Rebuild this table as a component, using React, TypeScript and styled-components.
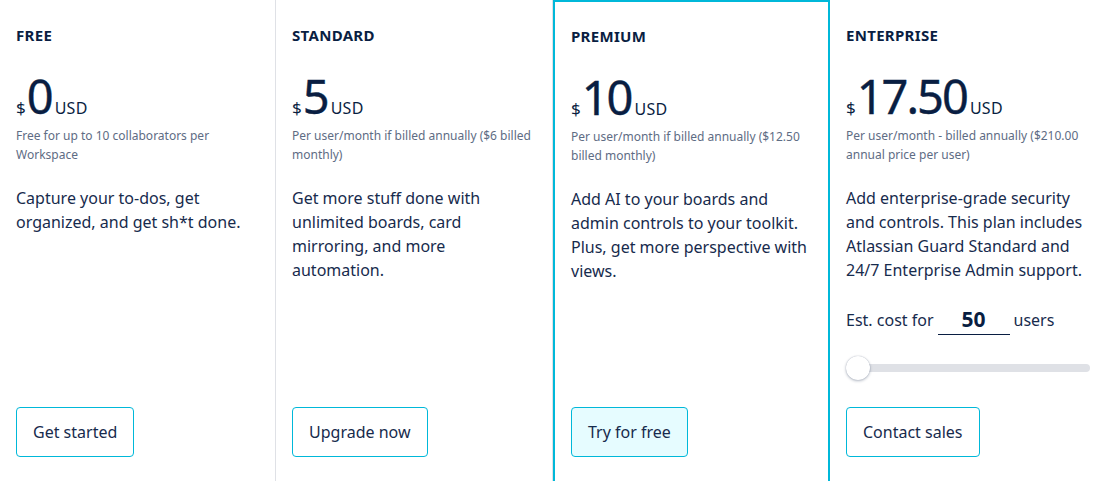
import React, { useState } from "react";
import styled, { createGlobalStyle } from "styled-components";

const Global = createGlobalStyle`
  html, body { margin: 0; padding: 0; background: #fff; overflow: hidden; }
  body { font-family: "Noto Sans", "Liberation Sans", sans-serif; color: #172b4d; }
  * { box-sizing: border-box; }
`;

const Grid = styled.div`
  display: grid;
  grid-template-columns: 276px 277px 277px 1fr;
  width: 1104px;
  height: 484px;
`;

const Column = styled.div<{ $featured?: boolean; $divider?: boolean }>`
  display: flex;
  flex-direction: column;
  padding: ${(p) => (p.$featured ? "25px 16px 25px" : "26px 16px 27px")};
  border-right: ${(p) => (p.$divider ? "1px solid #dfe1e6" : "none")};
  border: ${(p) => (p.$featured ? "2px solid #00b8d9" : undefined)};
`;

const Title = styled.div`
  font-size: 15px;
  line-height: 18px;
  font-weight: 700;
  color: #091e42;
  letter-spacing: 0.3px;
`;

const PriceRow = styled.div`
  display: flex;
  align-items: baseline;
  margin-top: 26px;
  color: #091e42;
`;

const Currency = styled.span`
  font-size: 17px;
  margin-right: 1px;
`;

const Amount = styled.span`
  font-size: 47px;
  line-height: 52px;
  font-weight: 400;
  letter-spacing: -2px;
  -webkit-text-stroke: 0.4px #091e42;
`;

const Unit = styled.span`
  font-size: 16px;
  margin-left: 3px;
  letter-spacing: 0.3px;
`;

const Note = styled.div`
  font-size: 12px;
  line-height: 19px;
  color: #5e6c84;
  margin-top: 4px;
`;

const Desc = styled.div`
  font-size: 16px;
  line-height: 24px;
  color: #172b4d;
  margin-top: 22px;
`;

const CostRow = styled.div`
  display: flex;
  align-items: center;
  margin-top: 23px;
  font-size: 16px;
  line-height: 24px;
`;

const CostInput = styled.div`
  width: 72px;
  margin: 0 4px 0 4px;
  text-align: center;
  font-size: 21px;
  font-weight: 700;
  color: #091e42;
  border-bottom: 1px solid #091e42;
  line-height: 28px;
  padding-bottom: 1px;
`;

const Track = styled.div`
  position: relative;
  margin-top: 29px;
  height: 8px;
  border-radius: 4px;
  background: #dfe1e6;
  width: 244px;
`;

const Thumb = styled.div`
  position: absolute;
  left: 0;
  top: -8px;
  width: 24px;
  height: 24px;
  border-radius: 50%;
  background: #fff;
  box-shadow: 0 1px 3px rgba(9, 30, 66, 0.3), 0 0 1px rgba(9, 30, 66, 0.3);
`;

const Button = styled.button<{ $primary?: boolean }>`
  margin-top: auto;
  align-self: flex-start;
  font-family: inherit;
  font-size: 16px;
  line-height: 24px;
  color: #172b4d;
  padding: 12px 16px;
  border: 1px solid #00b8d9;
  border-radius: 4px;
  background: ${(p) => (p.$primary ? "#e6fcff" : "#fff")};
  cursor: pointer;
`;

type Plan = {
  name: string;
  amount: string;
  note: string;
  desc: string;
  cta: string;
  featured?: boolean;
  divider?: boolean;
  estimator?: boolean;
};

const plans: Plan[] = [
  {
    name: "FREE",
    amount: "0",
    note: "Free for up to 10 collaborators per Workspace",
    desc: "Capture your to-dos, get organized, and get sh*t done.",
    cta: "Get started",
    divider: true,
  },
  {
    name: "STANDARD",
    amount: "5",
    note: "Per user/month if billed annually ($6 billed monthly)",
    desc: "Get more stuff done with unlimited boards, card mirroring, and more automation.",
    cta: "Upgrade now",
    divider: true,
  },
  {
    name: "PREMIUM",
    amount: "10",
    note: "Per user/month if billed annually ($12.50 billed monthly)",
    desc: "Add AI to your boards and admin controls to your toolkit. Plus, get more perspective with views.",
    cta: "Try for free",
    featured: true,
  },
  {
    name: "ENTERPRISE",
    amount: "17.50",
    note: "Per user/month - billed annually ($210.00 annual price per user)",
    desc: "Add enterprise-grade security and controls. This plan includes Atlassian Guard Standard and 24/7 Enterprise Admin support.",
    cta: "Contact sales",
    estimator: true,
  },
];

export default function App() {
  const [users] = useState(50);
  return (
    <>
      <Global />
      <Grid>
        {plans.map((p) => (
          <Column key={p.name} $featured={p.featured} $divider={p.divider}>
            <Title>{p.name}</Title>
            <PriceRow>
              <Currency>$</Currency>
              <Amount>{p.amount}</Amount>
              <Unit>USD</Unit>
            </PriceRow>
            <Note>{p.note}</Note>
            <Desc>{p.desc}</Desc>
            {p.estimator && (
              <>
                <CostRow>
                  Est. cost for <CostInput>{users}</CostInput> users
                </CostRow>
                <Track>
                  <Thumb />
                </Track>
              </>
            )}
            <Button $primary={p.featured}>{p.cta}</Button>
          </Column>
        ))}
      </Grid>
    </>
  );
}
